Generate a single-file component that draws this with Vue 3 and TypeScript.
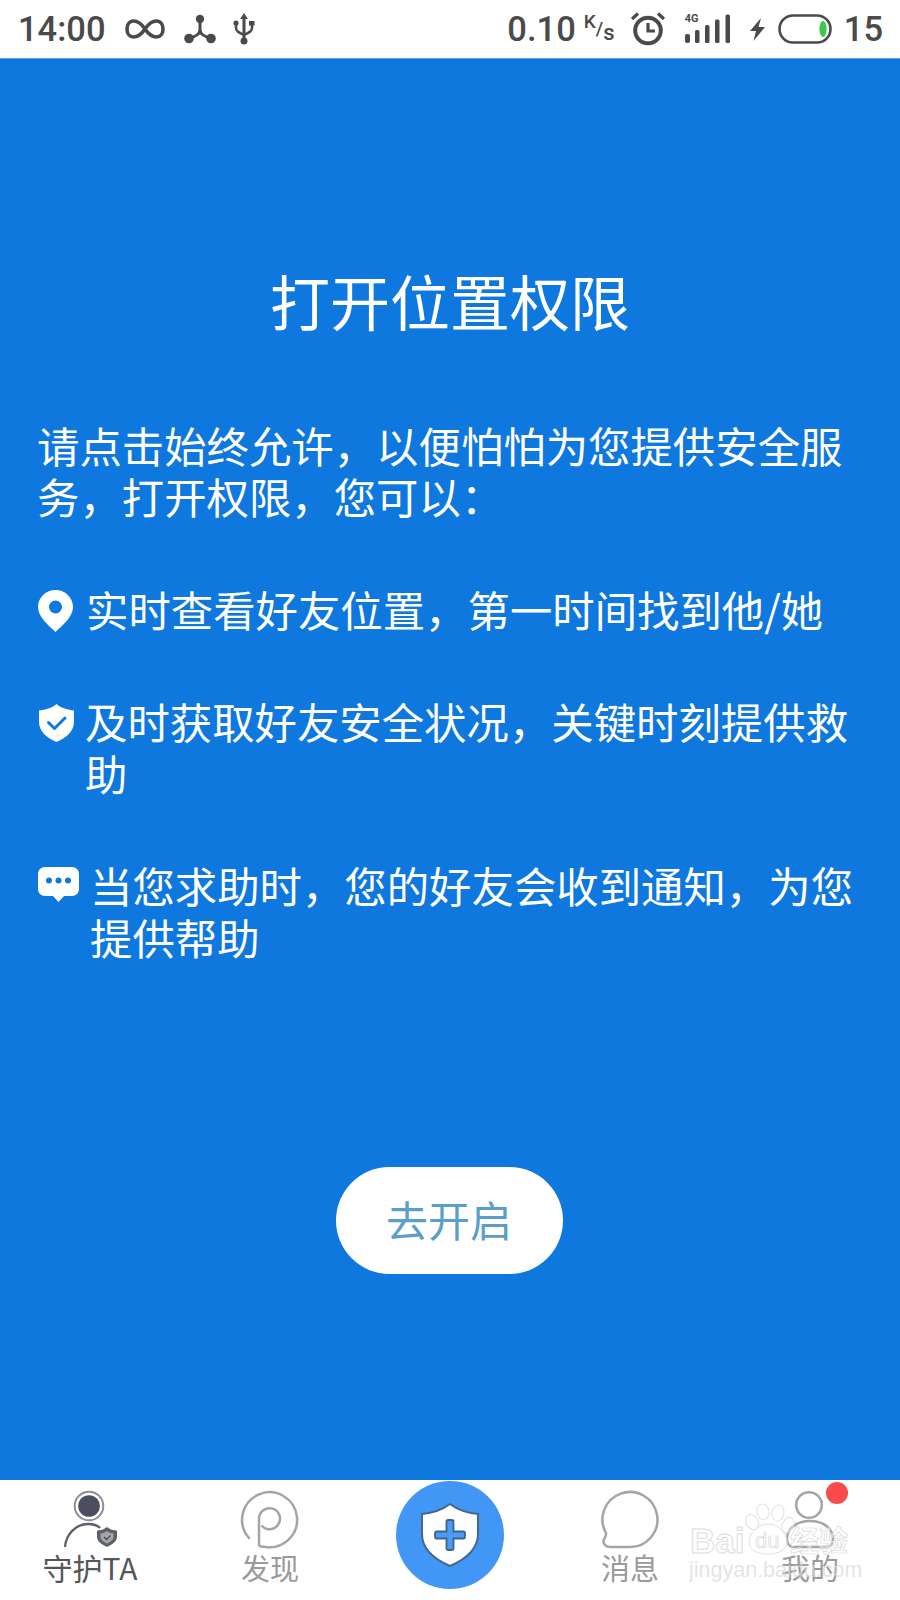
<script setup lang="ts">
const intro = '请点击始终允许，以便怕怕为您提供安全服务，打开权限，您可以：'
</script>

<template>
  <div class="screen">
    <header class="status">
      <span class="time">14:00</span>
      <svg class="si inf" width="40" height="22" viewBox="0 0 40 22">
        <path d="M20 11C16 5 12 3 8.500 3C4.500 3 2 6.500 2 11C2 15.500 4.500 19 8.500 19C12 19 16 17 20 11C24 5 28 3 31.500 3C35.500 3 38 6.500 38 11C38 15.500 35.500 19 31.500 19C28 19 24 17 20 11Z" fill="none" stroke="#4a4a4a" stroke-width="3.600" />
      </svg>
      <svg class="si tri" width="32" height="30" viewBox="0 0 32 30">
        <g stroke="#4a4a4a" stroke-width="3" fill="none">
          <line x1="16" y1="5" x2="16" y2="17" />
          <path d="M16 16C16 20 11 23 5 24" />
          <path d="M16 16C16 20 21 23 27 24" />
        </g>
        <circle cx="16" cy="5" r="4.200" fill="#4a4a4a" />
        <circle cx="5" cy="24.500" r="4.800" fill="#4a4a4a" />
        <circle cx="27" cy="24.500" r="4.800" fill="#4a4a4a" />
      </svg>
      <svg class="si usb" width="22" height="32" viewBox="0 0 22 32">
        <path d="M11 0L15 6H7Z" fill="#4a4a4a" />
        <line x1="11" y1="4" x2="11" y2="28" stroke="#4a4a4a" stroke-width="3" />
        <circle cx="11" cy="28" r="3.500" fill="#4a4a4a" />
        <path d="M3 11V15C3 18 5 19 11 22C17 19 19 18 19 15V11" fill="none" stroke="#4a4a4a" stroke-width="2.500" />
        <circle cx="3" cy="10" r="2.600" fill="#4a4a4a" />
        <rect x="16" y="8" width="5.500" height="4.500" fill="#4a4a4a" />
      </svg>
      <span class="spacer"></span>
      <span class="speed">0.10</span>
      <span class="unit"><sup>K</sup>/<sub>s</sub></span>
      <svg class="si alarm" width="36" height="34" viewBox="0 0 36 34">
        <circle cx="18" cy="18.500" r="12.800" fill="none" stroke="#4a4a4a" stroke-width="4" />
        <path d="M18 11V19H25" fill="none" stroke="#4a4a4a" stroke-width="3.200" />
        <path d="M2 7L8 1.500M34 7L28 1.500" stroke="#4a4a4a" stroke-width="3.200" fill="none" />
      </svg>
      <div class="signal">
        <span class="g4">4G</span>
        <svg width="46" height="30" viewBox="0 0 46 30">
          <rect x="1" y="20" width="5" height="9" rx="2" fill="#4a4a4a" />
          <rect x="11" y="16" width="4.500" height="13" rx="1.500" fill="#4a4a4a" />
          <rect x="21" y="11" width="4.500" height="18" rx="1.500" fill="#4a4a4a" />
          <rect x="31" y="5.500" width="4.500" height="23.500" rx="1.500" fill="#4a4a4a" />
          <rect x="41.500" y="0.500" width="4.500" height="28.500" rx="1.500" fill="#4a4a4a" />
        </svg>
      </div>
      <svg class="si bolt" width="17" height="23" viewBox="0 0 17 23">
        <path d="M12 0L1 13H7L4.500 23L16 9H9.500Z" fill="#4a4a4a" />
      </svg>
      <svg class="si batt" width="54" height="30" viewBox="0 0 54 30">
        <rect x="1.500" y="1.500" width="51" height="27" rx="13.500" fill="none" stroke="#4a4a4a" stroke-width="2.600" />
        <ellipse cx="45" cy="15" rx="3.600" ry="8" fill="#3cc84c" />
      </svg>
      <span class="level">15</span>
    </header>

    <main class="main">
      <h1 class="title">打开位置权限</h1>
      <p class="intro">{{ intro }}</p>

      <div class="item first">
        <svg class="ico pin" width="35" height="42" viewBox="0 0 35 42">
          <path d="M17.500 0C8 0 0 7.500 0 17C0 27 11 36 17.500 42C24 36 35 27 35 17C35 7.500 27 0 17.500 0Z" fill="#fff" />
          <circle cx="17.500" cy="17" r="6.500" fill="#0e78de" />
        </svg>
        <span class="text">实时查看好友位置，第一时间找到他/她</span>
      </div>
      <div class="item">
        <svg class="ico shield" width="35" height="38" viewBox="0 0 35 38">
          <path d="M17.500 0C22 4 29 6 35 6.500V18C35 28 26 34.500 17.500 38C9 34.500 0 28 0 18V6.500C6 6 13 4 17.500 0Z" fill="#fff" />
          <path d="M9.500 18.500L15.500 24.500L26 14" fill="none" stroke="#0e78de" stroke-width="3" stroke-linecap="round" stroke-linejoin="round" />
        </svg>
        <span class="text">及时获取好友安全状况，关键时刻提供救助</span>
      </div>
      <div class="item">
        <svg class="ico bubble" width="41" height="35" viewBox="0 0 41 35">
          <path d="M7 0H34C38 0 41 3 41 7V22C41 26 38 29 34 29H26L20.500 35L15 29H7C3 29 0 26 0 22V7C0 3 3 0 7 0Z" fill="#fff" />
          <circle cx="11" cy="13.500" r="3" fill="#0e78de" />
          <circle cx="20.500" cy="13.500" r="3" fill="#0e78de" />
          <circle cx="30" cy="13.500" r="3" fill="#0e78de" />
        </svg>
        <span class="text">当您求助时，您的好友会收到通知，为您提供帮助</span>
      </div>

      <button class="open" type="button">去开启</button>
    </main>

    <nav class="tabs">
      <div class="tab active">
        <svg class="tab-ico" width="60" height="60" viewBox="0 0 60 60">
          <circle cx="29" cy="15" r="14.300" fill="none" stroke="#8c8e94" stroke-width="2" />
          <circle cx="29" cy="15" r="10.800" fill="#4b4e5e" />
          <path d="M5 56C6 43 16 33 28 33C33 33 37 34 40 37" fill="none" stroke="#5c5e68" stroke-width="2.300" />
          <path d="M47 36C50 38.500 53 39.500 57 39.500V46C57 50.500 52 53.500 47 56C42 53.500 37 50.500 37 46V39.500C41 39.500 44 38.500 47 36Z" fill="#5d6069" />
          <path d="M47 40C49 41.500 51 42.500 53.500 42.500V46C53.500 49 50 51 47 52.500C44 51 40.500 49 40.500 46V42.500C43 42.500 45 41.500 47 40Z" fill="#a3a5ab" />
          <path d="M44 46L46.500 48.500L50.500 44.500" fill="none" stroke="#4b4e5e" stroke-width="1.400" />
        </svg>
        <span class="tab-label">守护TA</span>
      </div>
      <div class="tab">
        <svg class="tab-ico" width="60" height="60" viewBox="0 0 60 60">
          <path d="M9 47A27.500 27.500 0 1 1 24 55.700" fill="none" stroke="#a5a5a5" stroke-width="2.500" stroke-linecap="round" />
          <path d="M19 55V27.500A10.500 10.500 0 1 1 21.500 34.500" fill="none" stroke="#a5a5a5" stroke-width="2.500" />
          <path d="M19 55C20.500 55.500 22.500 55.700 24 55.700" fill="none" stroke="#a5a5a5" stroke-width="2.500" />
        </svg>
        <span class="tab-label">发现</span>
      </div>
      <div class="tab center">
        <div class="add">
          <svg width="60" height="66" viewBox="0 0 60 66">
            <path d="M30 2C38 8 47 11 58 12V32C58 48 44 58 30 64C16 58 2 48 2 32V12C13 11 22 8 30 2Z" fill="#fff" stroke="#46668c" stroke-width="2" />
            <path d="M26.500 19.500C26.500 18.500 27.500 18 28.500 18H31.500C32.500 18 33.500 18.500 33.500 19.500V29.500H43.500C44.500 29.500 45 30.500 45 31.500V34.500C45 35.500 44.500 36.500 43.500 36.500H33.500V46.500C33.500 47.500 32.500 48 31.500 48H28.500C27.500 48 26.500 47.500 26.500 46.500V36.500H16.500C15.500 36.500 15 35.500 15 34.500V31.500C15 30.500 15.500 29.500 16.500 29.500H26.500Z" fill="#4a9af6" stroke="#3a6490" stroke-width="1.800" />
          </svg>
        </div>
      </div>
      <div class="tab">
        <svg class="tab-ico" width="60" height="60" viewBox="0 0 60 60">
          <path d="M6 42A27.500 27.500 0 1 1 30 56H10C5 56 2.500 52 4 48.500C5 46.500 6.500 44.500 6 42Z" fill="none" stroke="#a5a5a5" stroke-width="2.500" stroke-linejoin="round" />
        </svg>
        <span class="tab-label">消息</span>
      </div>
      <div class="tab">
        <svg class="tab-ico" width="60" height="60" viewBox="0 0 60 60">
          <circle cx="29" cy="14" r="12.800" fill="none" stroke="#a5a5a5" stroke-width="2.500" />
          <path d="M7 48C7 38 16 30 30 30C44 30 53 38 53 48C53 53 50 56 46 56H14C10 56 7 53 7 48Z" fill="none" stroke="#a5a5a5" stroke-width="2.500" />
        </svg>
        <span class="tab-label">我的</span>
        <span class="badge"></span>
      </div>

      <svg class="mark" width="176" height="84" viewBox="0 0 176 84">
        <g fill="rgba(255,255,255,.3)" stroke="#e0e0e0" stroke-width="1">
          <ellipse cx="63" cy="20" rx="6" ry="8" transform="rotate(-30 63 20)" />
          <ellipse cx="74" cy="10" rx="6" ry="8" transform="rotate(-10 74 10)" />
          <ellipse cx="89" cy="11" rx="6" ry="8" transform="rotate(10 89 11)" />
          <ellipse cx="99" cy="23" rx="5.500" ry="8" transform="rotate(25 99 23)" />
          <path d="M79 22C90 22 98 32 98 40C98 48 90 52 79 52C68 52 60 48 60 40C60 32 68 22 79 22Z" />
        </g>
        <text x="1" y="51" class="mark-big">Bai</text>
        <text x="66" y="46" class="mark-small">du</text>
        <text x="101" y="50" class="mark-cn">经验</text>
        <text x="0" y="75" class="mark-url">jingyan.baidu.com</text>
      </svg>
    </nav>
  </div>
</template>

<style>
html,
body {
  margin: 0;
  background: #fff;
}
</style>

<style scoped>
.screen {
  width: 900px;
  height: 1600px;
  display: flex;
  flex-direction: column;
  overflow: hidden;
  font-family: "Noto Sans CJK SC", "Noto Sans", sans-serif;
}

.status {
  height: 58px;
  flex: none;
  display: flex;
  align-items: center;
  background: #fff;
  color: #4a4a4a;
  font-family: Roboto, "Noto Sans", sans-serif;
  font-weight: 500;
  padding-left: 18px;
  padding-right: 17px;
  box-sizing: border-box;
}
.time {
  font-size: 34.500px;
  line-height: 58px;
}
.si {
  flex: none;
  display: block;
}
.inf,
.tri {
  margin-left: 19px;
}
.usb {
  margin-left: 17px;
}
.spacer {
  flex: 1;
}
.speed {
  font-size: 34.500px;
}
.unit {
  font-size: 19px;
  width: 32px;
  margin-left: 8px;
  white-space: nowrap;
  line-height: 30px;
  font-weight: 500;
}
.unit sup {
  font-size: 19px;
  vertical-align: 7px;
  line-height: 0;
}
.unit sub {
  font-size: 22px;
  vertical-align: -5px;
  line-height: 0;
}
.alarm {
  margin-left: 14px;
}
.signal {
  position: relative;
  margin-left: 18px;
  width: 46px;
  height: 30px;
  flex: none;
}
.signal svg {
  display: block;
}
.g4 {
  position: absolute;
  left: 1px;
  top: -1px;
  font-size: 11px;
  line-height: 11px;
  font-weight: 700;
}
.bolt {
  margin-left: 19px;
}
.batt {
  margin-left: 12px;
}
.level {
  font-size: 34.500px;
  margin-left: 12px;
}

.main {
  flex: 1;
  background: #0e78de;
  border-top: 1px solid #5aa2e6;
  color: #fff;
  display: flex;
  flex-direction: column;
  padding: 201px 30px 0 38px;
  box-sizing: border-box;
  min-height: 0;
}
.title {
  margin: 0 -30px 0 -38px;
  height: 80px;
  font-size: 60px;
  line-height: 80px;
  font-weight: 400;
  text-align: center;
}
.intro {
  margin: 79px 0 0 -1px;
  font-size: 42.400px;
  line-height: 51px;
}
.item {
  display: flex;
  align-items: flex-start;
  gap: 13px;
  margin-top: 60px;
  font-size: 42.400px;
  line-height: 52px;
}
.item.first {
  margin-top: 65px;
}
.ico {
  flex: none;
  display: block;
}
.pin {
  margin-top: 4px;
}
.shield {
  margin-top: 6px;
  margin-left: 1px;
  margin-right: -2px;
}
.bubble {
  margin-top: 5px;
  margin-right: -2px;
}
.text {
  flex: 1;
  min-width: 0;
  margin-top: -3px;
  padding-bottom: 3px;
}
.open {
  align-self: center;
  margin: 201px 10px 0 0;
  width: 227px;
  height: 107px;
  border: 0;
  border-radius: 54px;
  background: #fff;
  color: #5a9fc9;
  font-family: inherit;
  font-size: 42px;
  line-height: 100px;
  padding: 0 0 4px;
}

.tabs {
  position: relative;
  height: 120px;
  flex: none;
  display: grid;
  grid-template-columns: repeat(5, 1fr);
  background: #fff;
}
.tab {
  position: relative;
  display: flex;
  flex-direction: column;
  align-items: center;
  padding-top: 11px;
  color: #9a9a9a;
}
.tab.active {
  color: #55565c;
}
.tab-ico {
  display: block;
  flex: none;
  overflow: visible;
}
.tab-label {
  margin-top: -1px;
  font-size: 29px;
  line-height: 34px;
  white-space: nowrap;
}
.active .tab-label {
  font-size: 30px;
  font-family: "Noto Sans CJK SC", Roboto, sans-serif;
}
.add {
  width: 108px;
  height: 108px;
  margin-top: -10px;
  border-radius: 50%;
  background: #4296f5;
  display: flex;
  align-items: center;
  justify-content: center;
}
.add svg {
  display: block;
}
.badge {
  position: absolute;
  left: 106px;
  top: 2px;
  width: 22px;
  height: 22px;
  border-radius: 50%;
  background: #f94b4b;
}
.mark {
  position: absolute;
  left: 689px;
  top: 22px;
  pointer-events: none;
}
.mark-big {
  font-family: "Liberation Sans", sans-serif;
  font-size: 35px;
  font-weight: 700;
  fill: rgba(255, 255, 255, 0.4);
  stroke: #dcdcdc;
  stroke-width: 1;
}
.mark-small {
  font-family: "Liberation Sans", sans-serif;
  font-size: 22px;
  fill: rgba(255, 255, 255, 0.4);
  stroke: #d8d8d8;
  stroke-width: 0.700;
}
.mark-cn {
  font-family: "Noto Sans CJK SC", sans-serif;
  font-size: 29px;
  font-weight: 700;
  fill: rgba(255, 255, 255, 0.45);
  stroke: #d8d8d8;
  stroke-width: 0.700;
}
.mark-url {
  font-family: "Liberation Sans", sans-serif;
  font-size: 21.500px;
  fill: rgba(216, 216, 216, 0.7);
}
</style>
